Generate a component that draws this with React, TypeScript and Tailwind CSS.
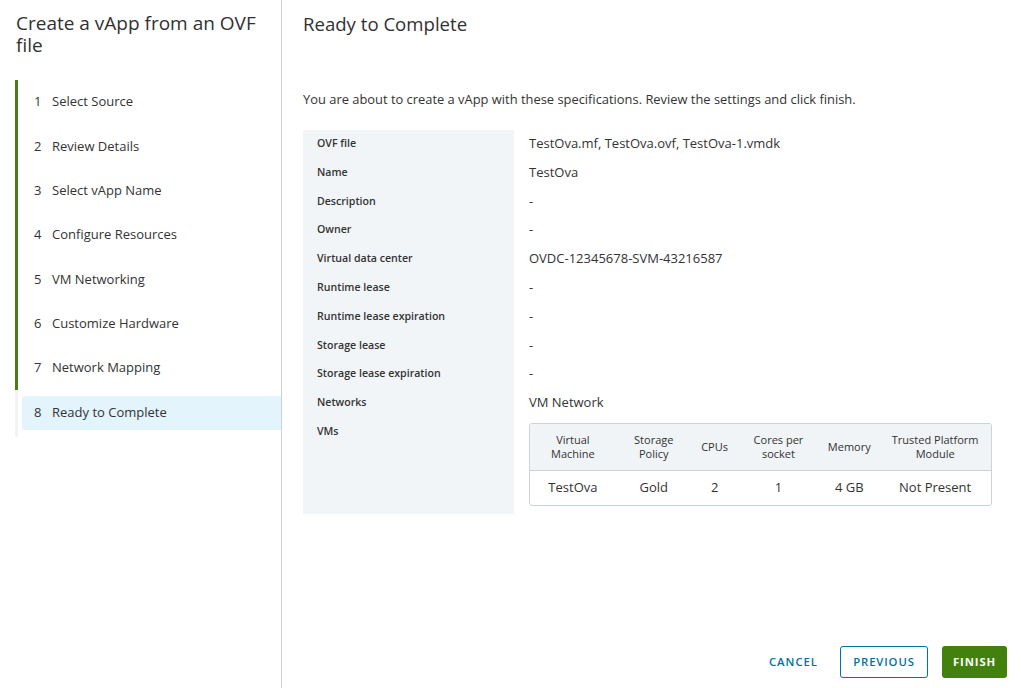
import React from "react";

const steps = [
  "Select Source",
  "Review Details",
  "Select vApp Name",
  "Configure Resources",
  "VM Networking",
  "Customize Hardware",
  "Network Mapping",
  "Ready to Complete",
];

const rows: [string, string][] = [
  ["OVF file", "TestOva.mf, TestOva.ovf, TestOva-1.vmdk"],
  ["Name", "TestOva"],
  ["Description", "-"],
  ["Owner", "-"],
  ["Virtual data center", "OVDC-12345678-SVM-43216587"],
  ["Runtime lease", "-"],
  ["Runtime lease expiration", "-"],
  ["Storage lease", "-"],
  ["Storage lease expiration", "-"],
  ["Networks", "VM Network"],
];

const cols = [
  ["Virtual", "Machine"],
  ["Storage", "Policy"],
  ["CPUs"],
  ["Cores per", "socket"],
  ["Memory"],
  ["Trusted Platform", "Module"],
];
const vals = ["TestOva", "Gold", "2", "1", "4 GB", "Not Present"];
const colW = ["w-[86px]", "w-[76px]", "w-[46px]", "w-[82px]", "w-[60px]", "w-[112px]"];

export default function App() {
  return (
    <div
      className="flex w-[1021px] h-[688px] bg-white text-[#333] overflow-hidden"
      style={{ fontFamily: '"Open Sans", "Liberation Sans", sans-serif' }}
    >
      {/* Sidebar */}
      <div className="w-[282px] shrink-0 border-r border-[#ccd3d8] flex flex-col">
        <h1 className="pl-[16px] pr-4 pt-[12px] text-[19px] leading-[22px] text-[#313131] font-normal">
          Create a vApp from an OVF file
        </h1>
        <div className="mt-[24px] pl-[15px] flex flex-col">
          <div className="border-l-[3px] border-[#4b7b16] flex flex-col">
            {steps.slice(0, 7).map((s, i) => (
              <div key={s} className="h-[44.3px] flex items-center pl-[16px] text-[13px] text-[#333]">
                <span className="w-[18px]">{i + 1}</span>
                <span>{s}</span>
              </div>
            ))}
          </div>
          <div className="border-l-[3px] border-[#f1f4f6] pt-[6px] pb-[7px]">
            <div className="ml-[4px] h-[34px] rounded-l-[3px] bg-[#e3f4fd] flex items-center pl-[12px] text-[13px] text-[#333]">
              <span className="w-[18px]">8</span>
              <span>Ready to Complete</span>
            </div>
          </div>
        </div>
      </div>

      {/* Main */}
      <div className="flex-1 flex flex-col pl-[21px] pr-[14px]">
        <h2 className="pt-[12px] text-[18.6px] leading-[24px] text-[#313131] font-normal">Ready to Complete</h2>
        <p className="mt-[54px] text-[12.9px] leading-[18px] text-[#333]">
          You are about to create a vApp with these specifications. Review the settings and click finish.
        </p>
        <div className="mt-[22px] flex">
          <div className="w-[211px] bg-[#f1f5f8] pl-[14px] pt-[6px] h-[384px]">
            {rows.map(([l]) => (
              <div key={l} className="h-[28.8px] text-[10.6px] font-semibold text-[#333] flex items-start">
                {l}
              </div>
            ))}
            <div className="text-[10.6px] font-semibold text-[#333]">VMs</div>
          </div>
          <div className="pl-[15px] pt-[4px] flex-1">
            {rows.map(([l, v]) => (
              <div key={l} className="h-[28.8px] text-[13px] text-[#333] flex items-start">
                {v}
              </div>
            ))}
            <div className="mt-[1px] w-[463px] border border-[#ccd3d8] rounded-[3px] overflow-hidden">
              <div className="flex bg-[#f0f4f7] h-[47px] border-b border-[#ccd3d8] items-center">
                {cols.map((c, i) => (
                  <div key={i} className={`${colW[i]} text-center text-[11px] leading-[14px] text-[#333]`}>
                    {c.map((t) => (
                      <div key={t}>{t}</div>
                    ))}
                  </div>
                ))}
              </div>
              <div className="flex h-[34px] items-center">
                {vals.map((v, i) => (
                  <div key={i} className={`${colW[i]} text-center text-[13px] text-[#333]`}>
                    {v}
                  </div>
                ))}
              </div>
            </div>
          </div>
        </div>
        <div className="flex-1" />
        <div className="flex justify-end items-center gap-[12px] pb-[10px]">
          <button className="h-[32px] px-[10px] text-[11.3px] font-semibold tracking-[1px] text-[#0072a3]">CANCEL</button>
          <button className="h-[32px] w-[88px] border border-[#0072a3] rounded-[3px] text-[11.3px] font-semibold tracking-[0.9px] text-[#0072a3]">PREVIOUS</button>
          <button className="ml-[2px] h-[32px] w-[65px] rounded-[3px] bg-[#42810e] text-[11.3px] font-bold tracking-[0.9px] text-white">FINISH</button>
        </div>
      </div>
    </div>
  );
}
